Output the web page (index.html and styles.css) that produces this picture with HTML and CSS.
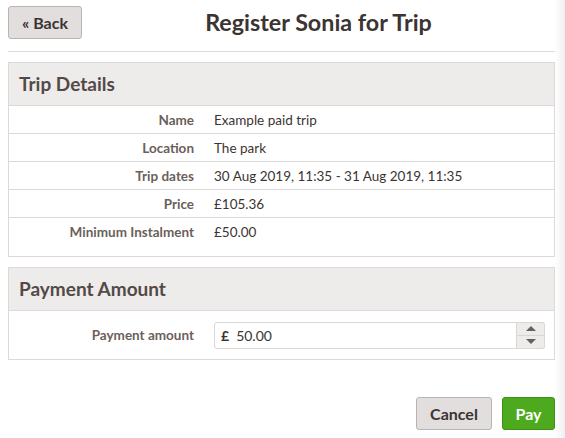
FILE: index.html
```html
<!DOCTYPE html>
<html>
<head>
<meta charset="utf-8">
<link rel="stylesheet" href="styles.css">
</head>
<body>
<div class="page">
  <div class="topbar">
    <button class="btn btn-back">« Back</button>
    <h1 class="title">Register Sonia for Trip</h1>
  </div>
  <hr class="rule">
  <section class="panel">
    <h2 class="panel-head">Trip Details</h2>
    <div class="panel-body">
      <div class="row"><span class="label">Name</span><span class="value">Example paid trip</span></div>
      <div class="row"><span class="label">Location</span><span class="value">The park</span></div>
      <div class="row"><span class="label">Trip dates</span><span class="value">30 Aug 2019, 11:35 - 31 Aug 2019, 11:35</span></div>
      <div class="row"><span class="label">Price</span><span class="value">£105.36</span></div>
      <div class="row row-last"><span class="label">Minimum Instalment</span><span class="value">£50.00</span></div>
    </div>
  </section>
  <section class="panel panel-pay">
    <h2 class="panel-head">Payment Amount</h2>
    <div class="pay-body">
      <span class="label">Payment amount</span>
      <div class="input">
        <span class="currency">£</span>
        <span class="amount">50.00</span>
        <span class="spinner">
          <span class="spin spin-up"><span class="tri-up"></span></span>
          <span class="spin"><span class="tri-down"></span></span>
        </span>
      </div>
    </div>
  </section>
  <div class="actions">
    <button class="btn btn-cancel">Cancel</button>
    <button class="btn btn-pay">Pay</button>
  </div>
</div>
<div class="edge-shadow"></div>
</body>
</html>
```
FILE: styles.css
```css
html, body {
  margin: 0;
  padding: 0;
  background: #fff;
}
body {
  font-family: "Lato", "Open Sans", sans-serif;
  color: #3b3432;
}
.page {
  width: 547px;
  padding: 6px 0 0 8px;
}
.topbar {
  display: flex;
  align-items: center;
  height: 33px;
}
.btn {
  font-family: inherit;
  font-weight: bold;
  font-size: 16px;
  border-radius: 3px;
  cursor: pointer;
  height: 33px;
  padding: 0;
}
.btn-back {
  width: 74px;
  background: #e2dedd;
  border: 1px solid #b9b4b2;
  color: #3b3432;
}
.title {
  flex: 1;
  margin: 0;
  text-align: center;
  font-size: 23.3px;
  font-weight: bold;
  color: #3b3432;
  line-height: 33px;
}
.rule {
  margin: 12px 0 0 0;
  border: 0;
  border-top: 1px solid #dddad9;
  height: 0;
}
.panel {
  margin-top: 10px;
  border: 1px solid #dcd9d8;
}
.panel-head {
  margin: 0;
  height: 42px;
  line-height: 42px;
  padding-left: 10px;
  background: #eeeceb;
  border-bottom: 1px solid #dcd9d8;
  font-size: 19px;
  font-weight: bold;
  color: #534946;
}
.panel-body {
  padding-bottom: 11px;
}
.row {
  display: flex;
  align-items: center;
  height: 27px;
  border-bottom: 1px solid #dcd9d8;
  font-size: 13.5px;
}
.row-last {
  border-bottom: 0;
}
.label {
  width: 185px;
  text-align: right;
  font-weight: bold;
  color: #6a5f5b;
  font-size: 13.5px;
  flex: none;
}
.value {
  margin-left: 20px;
  color: #3b3432;
}
.panel-pay {
  margin-top: 10px;
}
.pay-body {
  display: flex;
  align-items: center;
  height: 48px;
}
.input {
  margin-left: 20px;
  width: 329px;
  height: 25px;
  border: 1px solid #d9d6d5;
  border-radius: 3px;
  display: flex;
  align-items: center;
  font-size: 14px;
  position: relative;
}
.currency {
  font-weight: bold;
  margin-left: 6px;
  color: #3b3432;
}
.amount {
  margin-left: 7px;
}
.spinner {
  position: absolute;
  right: -1px;
  top: -1px;
  bottom: -1px;
  width: 27px;
  display: flex;
  flex-direction: column;
  border: 1px solid #d9d6d5;
  border-radius: 0 3px 3px 0;
  background: #eeeceb;
}
.spin {
  flex: 1;
  display: flex;
  align-items: center;
  justify-content: center;
}
.spin-up {
  border-bottom: 1px solid #d9d6d5;
}
.tri-up {
  width: 0;
  height: 0;
  border-left: 5px solid transparent;
  border-right: 5px solid transparent;
  border-bottom: 5px solid #6a5f5b;
}
.tri-down {
  width: 0;
  height: 0;
  border-left: 5px solid transparent;
  border-right: 5px solid transparent;
  border-top: 5px solid #6a5f5b;
}
.actions {
  display: flex;
  justify-content: flex-end;
  gap: 10px;
  margin-top: 37px;
}
.btn-cancel {
  width: 76px;
  background: #e2dedd;
  border: 1px solid #b9b4b2;
  color: #3b3432;
}
.btn-pay {
  width: 53px;
  background: #4daa1e;
  border: 1px solid #3e9115;
  color: #fff;
}
.edge-shadow {
  position: fixed;
  top: 0;
  right: 0;
  width: 10px;
  height: 100%;
  background: linear-gradient(to right, rgba(240,240,240,0), #efefef);
}
```
